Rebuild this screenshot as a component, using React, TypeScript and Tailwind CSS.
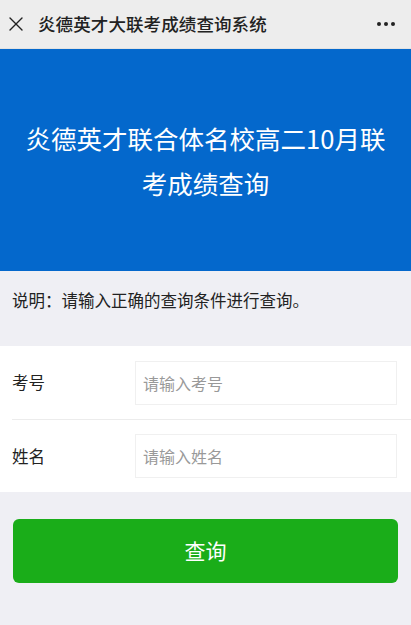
import { X } from "lucide-react";

const FONT = { fontFamily: '"Noto Sans CJK SC", "Noto Sans", sans-serif' };

export default function App() {
  return (
    <div className="w-[411px] h-[625px] bg-[#efeff4] overflow-hidden" style={FONT}>
      <div className="h-[49px] bg-[#ededed] flex items-center px-[4px] border-b border-[#e2e2e2]">
        <X className="w-[24px] h-[24px] text-[#222]" strokeWidth={1.4} />
        <span className="ml-[10px] text-[17.5px] font-medium text-[#222] tracking-[0.1px]">
          炎德英才大联考成绩查询系统
        </span>
        <div className="ml-auto mr-[12px] flex gap-[3px]">
          <span className="w-[4px] h-[4px] rounded-full bg-[#222]" />
          <span className="w-[4px] h-[4px] rounded-full bg-[#222]" />
          <span className="w-[4px] h-[4px] rounded-full bg-[#222]" />
        </div>
      </div>

      <div className="h-[222px] bg-[#0468cc] flex items-center justify-center px-[24px]">
        <h1 className="text-white text-[25.5px] leading-[45px] text-center">
          炎德英才联合体名校高二10月联考成绩查询
        </h1>
      </div>

      <div className="h-[75px] flex items-center px-[12px] -mt-[8px]">
        <p className="text-[16.5px] text-[#222]">说明：请输入正确的查询条件进行查询。</p>
      </div>

      <div className="bg-white mt-[8px]">
        <div className="flex items-center h-[73px] pl-[12px] pr-[14px]">
          <span className="w-[123px] text-[16.5px] text-[#222]">考号</span>
          <input
            placeholder="请输入考号"
            className="flex-1 h-[44px] border border-[#f0f0f0] px-[7px] text-[16px] placeholder:text-[#999] outline-none"
          />
        </div>
        <div className="ml-[12px] h-px bg-[#ececec]" />
        <div className="flex items-center h-[72px] pl-[12px] pr-[14px]">
          <span className="w-[123px] text-[16.5px] text-[#222]">姓名</span>
          <input
            placeholder="请输入姓名"
            className="flex-1 h-[44px] border border-[#f0f0f0] px-[7px] text-[16px] placeholder:text-[#999] outline-none"
          />
        </div>
      </div>

      <div className="px-[13px] pt-[27px]">
        <button className="w-full h-[64px] bg-[#1aad19] rounded-[6px] text-white text-[21px]">
          查询
        </button>
      </div>
    </div>
  );
}
